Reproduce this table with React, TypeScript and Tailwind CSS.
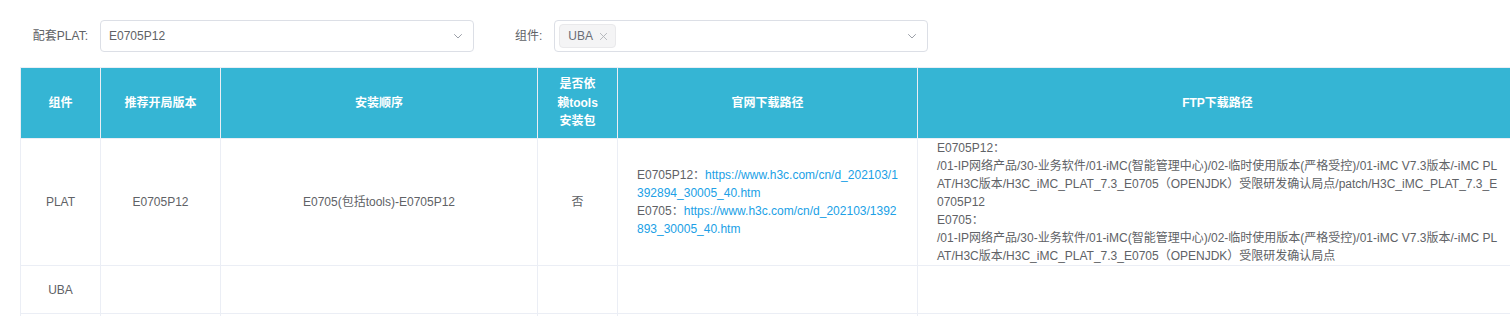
import React from "react";

const Chevron = () => (
  <svg width="12" height="12" viewBox="0 0 12 12" fill="none">
    <path d="M2.5 4.5 L6 8 L9.5 4.5" stroke="#9ca0a8" strokeWidth="1" strokeLinecap="round" strokeLinejoin="round" />
  </svg>
);

const Close = () => (
  <svg width="9" height="9" viewBox="0 0 10 10" fill="none">
    <path d="M1.5 1.5 L8.5 8.5 M8.5 1.5 L1.5 8.5" stroke="#b0b3b8" strokeWidth="1" strokeLinecap="round" />
  </svg>
);

export default function App() {
  const th =
    "bg-[#35b5d4] border border-[#ebeef5] text-white font-bold text-[12px] leading-[18.5px] text-center align-middle p-0";
  const td =
    "border border-[#ebeef5] text-[#606266] text-[12px] leading-[18px] text-center align-middle p-0";
  const ftp1 = [
    "E0705P12：",
    "/01-IP网络产品/30-业务软件/01-iMC(智能管理中心)/02-临时使用版本(严格受控)/01-iMC V7.3版本/-iMC PL",
    "AT/H3C版本/H3C_iMC_PLAT_7.3_E0705（OPENJDK）受限研发确认局点/patch/H3C_iMC_PLAT_7.3_E",
    "0705P12",
    "E0705：",
    "/01-IP网络产品/30-业务软件/01-iMC(智能管理中心)/02-临时使用版本(严格受控)/01-iMC V7.3版本/-iMC PL",
    "AT/H3C版本/H3C_iMC_PLAT_7.3_E0705（OPENJDK）受限研发确认局点",
  ];
  return (
    <div className="w-[1510px] h-[316px] overflow-hidden bg-white font-['Liberation_Sans','Noto_Sans_CJK_SC',sans-serif]">
      <div className="pt-[20px] flex items-center">
        <div className="w-[88px] text-right pr-[0px] text-[12px] text-[#606266] leading-[16px]">配套PLAT:</div>
        <div className="ml-[12px] w-[374px] h-[32px] border border-[#dcdfe6] rounded-[4px] flex items-center justify-between pl-[8px] pr-[9px] text-[12px] text-[#606266]">
          <span>E0705P12</span>
          <Chevron />
        </div>
        <div className="ml-[41px] text-[12px] text-[#606266] leading-[16px]">组件:</div>
        <div className="ml-[12px] w-[374px] h-[32px] border border-[#dcdfe6] rounded-[4px] flex items-center justify-between pl-[4px] pr-[9px] text-[12px]">
          <div className="h-[24px] w-[57px] bg-[#f4f4f5] border border-[#e9e9eb] rounded-[4px] flex items-center pl-[8px] gap-[6px] text-[#6b6e75]">
            <span>UBA</span>
            <Close />
          </div>
          <Chevron />
        </div>
      </div>
      <div className="mt-[15px] ml-[20px] w-[1490px] overflow-hidden">
        <table className="table-fixed border-collapse w-[1497px]">
          <colgroup>
            <col className="w-[80px]" />
            <col className="w-[120px]" />
            <col className="w-[317px]" />
            <col className="w-[80px]" />
            <col className="w-[300px]" />
            <col className="w-[600px]" />
          </colgroup>
          <thead>
            <tr className="h-[71px]">
              <th className={th}>组件</th>
              <th className={th}>推荐开局版本</th>
              <th className={th}>安装顺序</th>
              <th className={th}>
                <div>是否依</div>
                <div>赖tools</div>
                <div>安装包</div>
              </th>
              <th className={th}>官网下载路径</th>
              <th className={th}>FTP下载路径</th>
            </tr>
          </thead>
          <tbody>
            <tr className="h-[127px]">
              <td className={td}>PLAT</td>
              <td className={td}>E0705P12</td>
              <td className={td}>E0705(包括tools)-E0705P12</td>
              <td className={td}>否</td>
              <td className={td + " text-left"}>
                <div className="pl-[19px]">
                  <div className="whitespace-nowrap">
                    E0705P12：<span className="text-[#209fe6]">https://www.h3c.com/cn/d_202103/1</span>
                  </div>
                  <div className="whitespace-nowrap text-[#209fe6]">392894_30005_40.htm</div>
                  <div className="whitespace-nowrap">
                    E0705：<span className="text-[#209fe6]">https://www.h3c.com/cn/d_202103/1392</span>
                  </div>
                  <div className="whitespace-nowrap text-[#209fe6]">893_30005_40.htm</div>
                </div>
              </td>
              <td className={td + " text-left"}>
                <div className="pl-[19px]">
                  {ftp1.map((l, i) => (
                    <div key={i} className="whitespace-nowrap">
                      {l}
                    </div>
                  ))}
                </div>
              </td>
            </tr>
            <tr className="h-[48px]">
              <td className={td}>UBA</td>
              <td className={td}></td>
              <td className={td}></td>
              <td className={td}></td>
              <td className={td}></td>
              <td className={td}></td>
            </tr>
            <tr className="h-[48px]">
              <td className={td}></td>
              <td className={td}></td>
              <td className={td}></td>
              <td className={td}></td>
              <td className={td}></td>
              <td className={td}></td>
            </tr>
          </tbody>
        </table>
      </div>
    </div>
  );
}
